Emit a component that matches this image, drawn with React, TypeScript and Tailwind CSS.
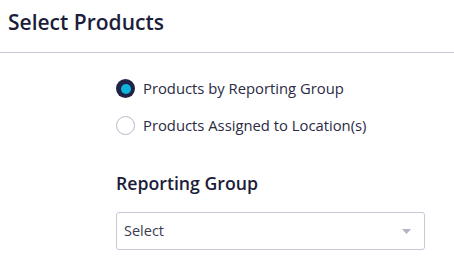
export default function App() {
  return (
    <div className="w-[454px] h-[275px] bg-white font-['Open_Sans',sans-serif] text-[#1c1d3a] overflow-hidden">
      {/* Header */}
      <div className="h-[53px] border-b border-[#c9c8da] px-2 flex items-start pt-[6px]">
        <h1 className="text-[21px] font-semibold leading-[32px]">Select Products</h1>
      </div>

      <div className="pl-[116px] pr-[29px] pt-[26px]">
        {/* Radios */}
        <div className="flex flex-col gap-[18px]">
          <label className="flex items-center gap-[8px] h-[19px]">
            <span className="w-[19px] h-[19px] rounded-full bg-[#212346] flex items-center justify-center">
              <span className="w-[10px] h-[10px] rounded-full bg-[#0db5dc]" />
            </span>
            <span className="text-[14.8px] text-[#2a2b45]">Products by Reporting Group</span>
          </label>
          <label className="flex items-center gap-[8px] h-[19px]">
            <span className="w-[19px] h-[19px] rounded-full border border-[#b9b8c9] bg-white" />
            <span className="text-[14.8px] text-[#2a2b45]">Products Assigned to Location(s)</span>
          </label>
        </div>

        {/* Reporting group */}
        <h2 className="mt-[36px] text-[17.7px] font-semibold leading-[24px]">Reporting Group</h2>
        <div className="mt-[17px] h-[38px] border border-[#c9c8da] rounded-[3px] flex items-center justify-between pl-[7px] pr-[13px]">
          <span className="text-[14.5px] text-[#3b3c52]">Select</span>
          <svg width="9" height="5" viewBox="0 0 9 5">
            <path d="M0 0h9L4.5 5z" fill="#b4b4c2" />
          </svg>
        </div>
      </div>
    </div>
  );
}
